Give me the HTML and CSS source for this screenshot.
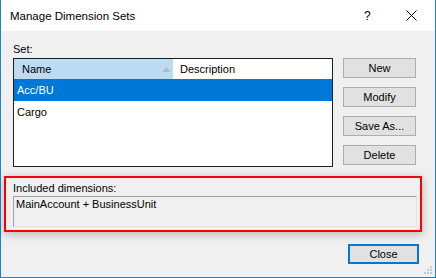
FILE: index.html
```html
<!DOCTYPE html>
<html lang="en">
<head>
    <meta charset="UTF-8">
    <title>Manage Dimension Sets</title>
    <link rel="stylesheet" href="styles.css">
</head>
<body>
    <div class="window">
        <div class="titlebar">
            <span class="title">Manage Dimension Sets</span>
            <span class="help">?</span>
            <svg class="close-x" width="11" height="11" viewBox="0 0 11 11">
                <path d="M0.5 0.5 L10.5 10.5 M10.5 0.5 L0.5 10.5" stroke="#000" stroke-width="1" fill="none"/>
            </svg>
        </div>

        <div class="content">
            <div class="set-label">Set:</div>
            <div class="main-row">
                <div class="listview">
                    <div class="list-header">
                        <div class="col-name">
                            <span>Name</span>
                            <svg class="sort" width="9" height="5" viewBox="0 0 9 5">
                                <path d="M4.5 0 L9 5 L0 5 Z" fill="#b9b9b9"/>
                            </svg>
                        </div>
                        <div class="col-desc">Description</div>
                    </div>
                    <div class="list-row selected">Acc/BU</div>
                    <div class="list-row">Cargo</div>
                </div>
                <div class="buttons">
                    <button class="btn">New</button>
                    <button class="btn">Modify</button>
                    <button class="btn">Save As...</button>
                    <button class="btn">Delete</button>
                </div>
            </div>

            <div class="included">
                <div class="included-label">Included dimensions:</div>
                <div class="included-box">MainAccount + BusinessUnit</div>
            </div>

            <div class="footer">
                <button class="btn btn-default">Close</button>
            </div>
        </div>

        <svg class="grip" width="9" height="9" viewBox="0 0 9 9">
            <rect x="6" y="0" width="2" height="2" fill="#c8c8c8"/>
            <rect x="3" y="3" width="2" height="2" fill="#c8c8c8"/>
            <rect x="6" y="3" width="2" height="2" fill="#c8c8c8"/>
            <rect x="0" y="6" width="2" height="2" fill="#c8c8c8"/>
            <rect x="3" y="6" width="2" height="2" fill="#c8c8c8"/>
            <rect x="6" y="6" width="2" height="2" fill="#c8c8c8"/>
        </svg>
    </div>
</body>
</html>
```

FILE: styles.css
```css
body {
    margin: 0;
    padding: 0;
    font-family: 'Liberation Sans', Arial, sans-serif;
    font-size: 11px;
    color: #000;
    background: #f0f0f0;
}

.window {
    position: relative;
    width: 436px;
    height: 278px;
    box-sizing: border-box;
    border: 1px solid #1883d7;
    border-top: none;
    background: #f0f0f0;
    display: flex;
    flex-direction: column;
}

/* barra de titlu */
.titlebar {
    height: 31px;
    background: #fff;
    display: flex;
    align-items: center;
    padding-left: 9px;
    font-size: 11.5px;
}

.title {
    flex: 1;
    line-height: 16px;
}

.help {
    width: 10px;
    margin-right: 32px;
    line-height: 16px;
    font-size: 12px;
}

.close-x {
    margin-right: 18px;
}

.content {
    flex: 1;
    display: flex;
    flex-direction: column;
    padding: 10px 0 0 12px;
}

.set-label {
    line-height: 16px;
    margin-bottom: 1px;
}

.main-row {
    display: flex;
    gap: 10px;
}

.listview {
    width: 320px;
    height: 109px;
    box-sizing: border-box;
    border: 1px solid #1e1e1e;
    background: #fff;
}

.list-header {
    display: flex;
    height: 20px;
    line-height: 20px;
}

.col-name {
    width: 159px;
    background: #bcdcf4;
    display: flex;
    align-items: center;
    justify-content: space-between;
    padding: 0 1px 0 8px;
    box-sizing: border-box;
}

.sort {
    margin-right: 1px;
}

.col-desc {
    padding-left: 7px;
}

.list-row {
    height: 22px;
    line-height: 22px;
    padding-left: 3px;
}

.list-row.selected {
    background: #0078d7;
    color: #fff;
}

.buttons {
    display: flex;
    flex-direction: column;
    gap: 9px;
}

.btn {
    width: 73px;
    height: 20px;
    box-sizing: border-box;
    background: #e1e1e1;
    border: 1px solid #adadad;
    font-family: inherit;
    font-size: 11px;
    padding: 0;
    color: #000;
}

/* zona marcata cu rosu */
.included {
    margin: 9px 0 0 -9px;
    width: 418px;
    height: 56px;
    box-sizing: border-box;
    border: 2px solid #f00;
    padding: 2px 3px 0 7px;
    box-shadow: 0 2px 9px rgba(0, 0, 0, 0.25);
}

.included-label {
    line-height: 16px;
}

.included-box {
    height: 31px;
    box-sizing: border-box;
    border: 1px solid #a0a0a0;
    border-right-color: #e3e3e3;
    border-bottom-color: #e3e3e3;
    background: #f0f0f0;
    padding: 0 2px;
    line-height: 14px;
}

.footer {
    display: flex;
    justify-content: flex-end;
    padding: 12px 16px 0 0;
}

.btn-default {
    width: 71px;
    border: 2px solid #0078d7;
}

.grip {
    position: absolute;
    right: 2px;
    bottom: 2px;
}
```
